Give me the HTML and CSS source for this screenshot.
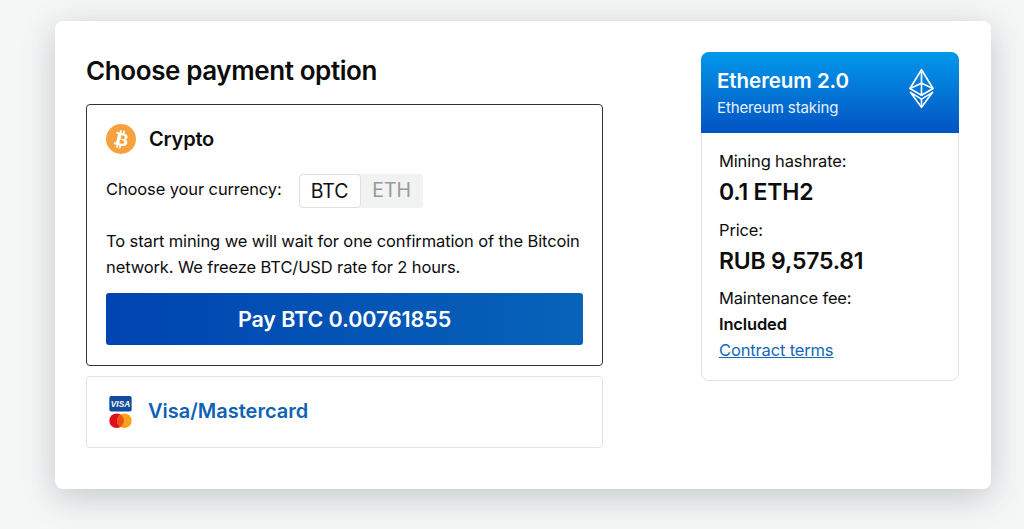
FILE: index.html
```html
<!DOCTYPE html>
<html lang="en">
<head>
<meta charset="utf-8">
<title>Choose payment option</title>
<link rel="stylesheet" href="styles.css">
</head>
<body>
<main class="panel">
  <section class="main-col">
    <h1 class="title">Choose payment option</h1>
    <div class="option option-active">
      <div class="option-head">
        <svg class="coin" viewBox="0 0 30 30" aria-hidden="true">
          <circle cx="15" cy="15" r="15" fill="#f7a23f"/>
          <path fill="#fff" fill-rule="evenodd" d="M15.9 5.9l-.6 2.6c.5.1 1 .2 1.500.4l.6-2.500 1.600.4-.6 2.600c2 .7 3.500 1.800 3.200 3.800-.2 1.500-1 2.200-2.100 2.400 1.500.8 2.300 2 1.600 4-.9 2.600-3.100 2.800-6 2.300l-.7 2.700-1.600-.4.7-2.700-1.300-.3-.7 2.700-1.600-.4.7-2.700-3.200-.8.8-1.900s1.200.3 1.200.3c.5.1.7-.2.8-.4l1.800-7.400c0-.3-.1-.7-.7-.8 0 0-1.200-.3-1.200-.3l.4-1.700 3.200.8.6-2.600zm-1.700 9.700l-.9 3.600c1.100.3 4.500 1.300 5-.7.500-2.100-3-2.600-4.100-2.900zm.5-.7c.9.2 3.800.7 4.200-1.200.400-1.900-2.500-2.300-3.400-2.500z"/>
        </svg>
        <h2 class="option-name">Crypto</h2>
      </div>
      <div class="currency-row">
        <span class="currency-label">Choose your currency:</span>
        <div class="segmented">
          <span class="segment segment-on">BTC</span>
          <span class="segment">ETH</span>
        </div>
      </div>
      <p class="note">To start mining we will wait for one confirmation of the Bitcoin network. We freeze BTC/USD rate for 2 hours.</p>
      <button class="pay" type="button">Pay BTC 0.00761855</button>
    </div>
    <div class="option option-card">
      <svg class="cards" viewBox="0 0 24 34" aria-hidden="true">
        <rect x="1" y="0" width="23" height="16" rx="2" fill="#0f4c9c"/>
        <text x="12.500" y="11" class="visa-text">VISA</text>
        <circle cx="8.500" cy="25.500" r="7.500" fill="#dc0f1c"/>
        <circle cx="16.500" cy="25.500" r="7.500" fill="#f9a11c"/>
        <path d="M12.500 19.150a7.500 7.500 0 0 1 0 12.700a7.500 7.500 0 0 1 0-12.700z" fill="#ee4f10"/>
      </svg>
      <span class="card-name">Visa/Mastercard</span>
    </div>
  </section>
  <aside class="summary">
    <header class="summary-head">
      <div>
        <div class="plan">Ethereum 2.0</div>
        <div class="plan-sub">Ethereum staking</div>
      </div>
      <svg class="eth" viewBox="0 0 28 42" aria-hidden="true">
        <g fill="none" stroke="#fff" stroke-width="1.700" stroke-linejoin="round">
          <path d="M14 1.500L2 21l12 7 12-7z"/>
          <path d="M2 21l12-5.500L26 21"/>
          <path d="M14 1.500V28"/>
          <path d="M2.500 25L14 32l11.500-7L14 40.500z"/>
          <path d="M14 32v8.500"/>
        </g>
      </svg>
    </header>
    <div class="summary-body">
      <div class="label">Mining hashrate:</div>
      <div class="value">0.1 ETH2</div>
      <div class="label label-gap">Price:</div>
      <div class="value">RUB 9,575.81</div>
      <div class="label label-gap-sm">Maintenance fee:</div>
      <div class="included">Included</div>
      <a class="terms" href="#">Contract terms</a>
    </div>
  </aside>
</main>
</body>
</html>
```
FILE: styles.css
```css
* { box-sizing: border-box; }
html, body { margin: 0; height: 100%; }
body {
  background: #f5f7f7;
  padding: 21px 33px 40px 55px;
  font-family: "Inter", "Liberation Sans", sans-serif;
  color: #0d0d0d;
  overflow: hidden;
}
.panel {
  width: 936px;
  height: 468px;
  background: #fff;
  border-radius: 8px;
  box-shadow: 0 8px 34px rgba(40, 45, 55, .24);
  padding: 31px 32px 0 31px;
  display: flex;
  justify-content: space-between;
  align-items: flex-start;
}
.main-col { width: 517px; }
.title {
  margin: 0 0 15px;
  font-size: 26px;
  line-height: 37px;
  font-weight: 600;
  letter-spacing: -.4px;
  color: #0b0b0b;
}
.option { background: #fff; border-radius: 4px; }
.option-active {
  height: 262px;
  border: 1px solid #333;
  padding: 19px 19px 0;
}
.option-head { display: flex; align-items: center; gap: 13px; height: 30px; }
.coin { width: 30px; height: 30px; flex: none; }
.option-name { margin: 0; font-size: 20px; font-weight: 600; line-height: 30px; letter-spacing: -.2px; }
.currency-row {
  margin-top: 18px;
  display: flex;
  align-items: flex-start;
  gap: 17px;
  font-size: 16.500px;
  height: 36px;
  letter-spacing: -.12px;
}
.currency-label { line-height: 34px; }
.segmented {
  display: flex;
  margin-top: 2px;
  background: #f1f2f2;
  border-radius: 4px;
  height: 34px;
}
.segment {
  width: 62px;
  text-align: center;
  line-height: 32px;
  font-size: 19.500px;
  color: #999;
}
.segment-on {
  background: #fff;
  color: #111;
  border: 1px solid #dfe1e1;
  border-radius: 4px;
}
.note {
  margin: 20px 0 0;
  font-size: 16.500px;
  line-height: 26px;
  letter-spacing: -.12px;
}
.pay {
  display: block;
  width: 100%;
  height: 52px;
  margin-top: 13px;
  border: 0;
  border-radius: 3px;
  background: linear-gradient(90deg, #0044b2, #0763b8);
  color: #fff;
  font: 600 21.500px "Inter", "Liberation Sans", sans-serif;
  letter-spacing: -.1px;
}
.option-card {
  height: 72px;
  margin-top: 10px;
  border: 1px solid #e2e4e4;
  display: flex;
  align-items: center;
  padding-left: 21px;
  gap: 16px;
}
.cards { width: 24px; height: 33px; flex: none; }
.visa-text { font: italic 700 8.500px "Liberation Sans", sans-serif; fill: #fff; text-anchor: middle; }
.card-name { font-size: 20px; font-weight: 600; color: #0e63b5; margin-bottom: 2px; }
.summary {
  width: 258px;
  height: 329px;
  border: 1px solid #e2e4e4;
  border-radius: 8px;
}
.summary-head {
  height: 81px;
  margin: -1px -1px 0;
  border-radius: 8px 8px 0 0;
  background: linear-gradient(180deg, #0298ea, #0353c2);
  color: #fff;
  padding: 15px 24px 0 16px;
  display: flex;
  justify-content: space-between;
}
.plan { font-size: 20.500px; font-weight: 600; line-height: 28px; letter-spacing: -.05px; }
.plan-sub { font-size: 15px; line-height: 24px; margin-top: 1px; color: #e8f2fb; letter-spacing: -.12px; }
.eth { width: 27px; height: 41px; margin-top: 1px; }
.summary-body { padding: 17px 17px 0; }
.label { font-size: 16.500px; line-height: 22px; letter-spacing: -.15px; }
.label-gap { margin-top: 10px; }
.label-gap-sm { margin-top: 9px; }
.value { font-size: 23px; font-weight: 600; line-height: 34px; margin-top: 3px; letter-spacing: -.2px; }
.included { font-size: 16.500px; font-weight: 600; line-height: 24px; margin-top: 3px; letter-spacing: -.15px; }
.terms { display: block; font-size: 16.500px; line-height: 24px; margin-top: 2px; color: #1568b8; text-decoration: underline; letter-spacing: -.15px; }
```
